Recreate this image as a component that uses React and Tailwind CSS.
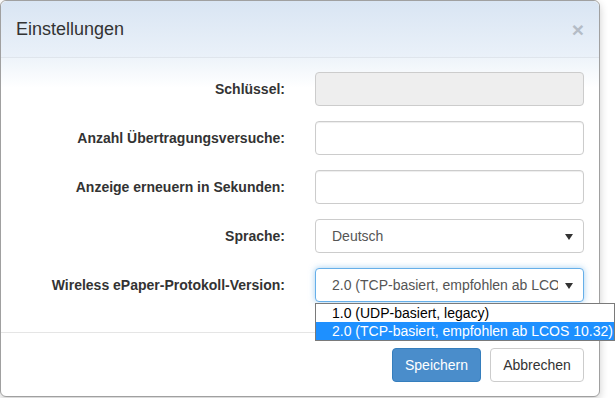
import React from 'react';

const rows = [
  { label: 'Schlüssel:', kind: 'disabled' },
  { label: 'Anzahl Übertragungsversuche:', kind: 'input' },
  { label: 'Anzeige erneuern in Sekunden:', kind: 'input' },
  { label: 'Sprache:', kind: 'select', value: 'Deutsch' },
  { label: 'Wireless ePaper-Protokoll-Version:', kind: 'open', value: '2.0 (TCP-basiert, empfohlen ab LCOS 10.32)' },
];

const options = ['1.0 (UDP-basiert, legacy)', '2.0 (TCP-basiert, empfohlen ab LCOS 10.32)'];

const Arrow = () => (
  <svg width="8" height="6" viewBox="0 0 8 6" className="absolute right-[10px] top-[14px]">
    <path d="M0 0 L8 0 L4 6 Z" fill="#333" />
  </svg>
);

const Field = ({ row }) => {
  if (row.kind === 'disabled') {
    return <div className="h-[34px] w-[269px] rounded border border-[#ccc] bg-[#eee]" />;
  }
  if (row.kind === 'input') {
    return <div className="h-[34px] w-[269px] rounded border border-[#ccc] bg-white shadow-[inset_0_1px_1px_rgba(0,0,0,0.075)]" />;
  }
  const open = row.kind === 'open';
  return (
    <div className="relative">
      <div
        className={
          'relative h-[34px] w-[269px] rounded border bg-white pl-[16px] text-[14px] leading-[32px] text-[#555] ' +
          (open
            ? 'border-[#66afe9] shadow-[0_0_6px_rgba(102,175,233,0.6)]'
            : 'border-[#ccc]')
        }
      >
        <div className="w-[226px] overflow-hidden whitespace-nowrap">{row.value}</div>
        <Arrow />
      </div>
      {open && (
        <div className="absolute left-0 top-[35px] z-10 w-[300px] border border-[#7a7a7a] bg-white text-[14px] leading-[18px] text-black">
          {options.map((o, i) => (
            <div
              key={o}
              className={'whitespace-nowrap pl-[16px] ' + (i === 1 ? 'bg-[#1e90ff] text-white' : '')}
            >
              {o}
            </div>
          ))}
        </div>
      )}
    </div>
  );
};

export default function App() {
  return (
    <div className="h-[398px] w-[616px] bg-white font-['Liberation_Sans',Arial,sans-serif]">
      <div className="relative h-[397px] w-[600px] overflow-visible rounded-md border border-[#a0a0a0] bg-white shadow-[0_3px_9px_rgba(0,0,0,0.2)]">
        <div className="flex h-[57px] items-center justify-between rounded-t-md border-b border-[#dfe5ec] bg-gradient-to-b from-[#d9e5f3] to-[#eaf1f9] px-[15px]">
          <h4 className="text-[18px] text-[#333]">Einstellungen</h4>
          <span className="text-[21px] font-bold leading-none text-[#b4bcc6]">×</span>
        </div>
        <div className="bg-gradient-to-b from-[#eef4fa] via-white to-white px-[15px] pt-[14px] pb-[15px] [background-size:100%_60px] bg-no-repeat">
          {rows.map((r) => (
            <div key={r.label} className="mb-[15px] flex items-center">
              <label className="w-[270px] text-right text-[14px] font-bold text-[#333]">{r.label}</label>
              <div className="ml-[30px]">
                <Field row={r} />
              </div>
            </div>
          ))}
        </div>
        <div className="flex justify-end gap-[9px] border-t border-[#e5e5e5] px-[15px] pt-[15px]">
          <button className="h-[34px] w-[89px] rounded border border-[#357ebd] bg-[#4a8dcb] text-[14px] text-white">
            Speichern
          </button>
          <button className="h-[34px] w-[94px] rounded border border-[#ccc] bg-white text-[14px] text-[#333]">
            Abbrechen
          </button>
        </div>
      </div>
    </div>
  );
}
